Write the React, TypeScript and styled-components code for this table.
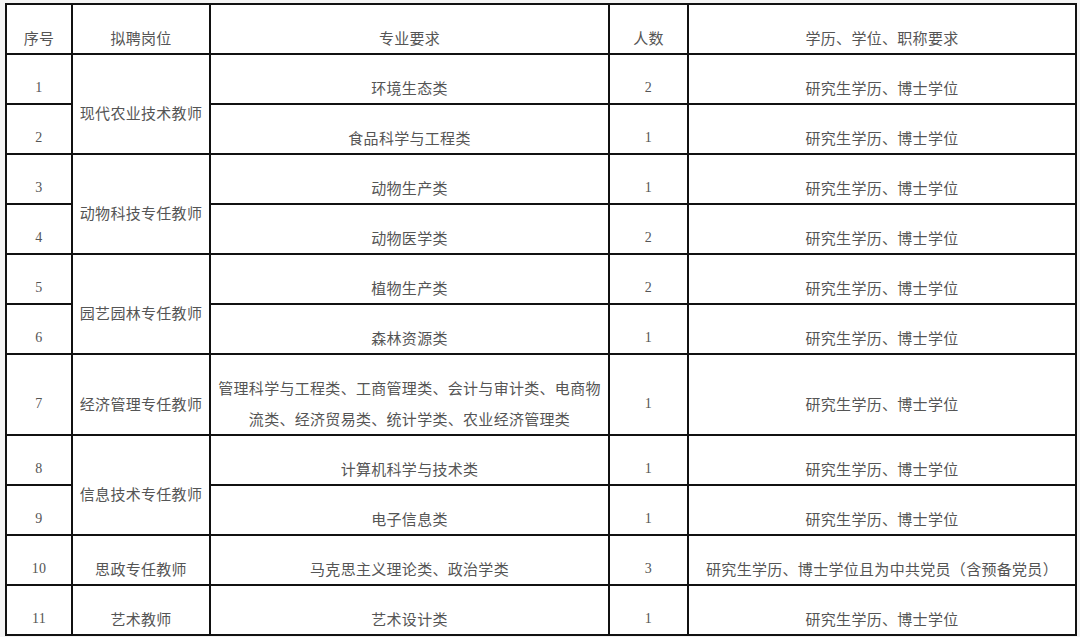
import React from "react";
import styled, { createGlobalStyle } from "styled-components";

const GlobalStyle = createGlobalStyle`
  html, body {
    margin: 0;
    padding: 0;
    background: #f4f4f4;
  }
  body {
    font-family: "Noto Sans CJK SC", "Noto Sans", sans-serif;
  }
`;

const Page = styled.div`
  padding: 3px 5px 0 5px;
`;

const Table = styled.table`
  width: 1070px;
  table-layout: fixed;
  border-collapse: collapse;
  background: #fff;
  border: 2px solid #111;
`;

const Row = styled.tr<{ $h?: number }>`
  height: ${(p) => p.$h ?? 50}px;
`;

const Cell = styled.td`
  border: 2px solid #111;
  padding: 17px 6px 0 6px;
  text-align: center;
  vertical-align: middle;
  font-size: 15px;
  line-height: 31px;
  color: #555;
  letter-spacing: 0.3px;
`;

const Num = styled(Cell)`
  font-family: "Liberation Serif", "Noto Sans CJK SC", serif;
  font-size: 14px;
  color: #555;
`;

type Item = {
  no: string;
  post?: string;
  span?: number;
  major: string;
  count: string;
  req: string;
  h?: number;
};

const BASIC = "研究生学历、博士学位";

const rows: Item[] = [
  { no: "1", post: "现代农业技术教师", span: 2, major: "环境生态类", count: "2", req: BASIC },
  { no: "2", major: "食品科学与工程类", count: "1", req: BASIC },
  { no: "3", post: "动物科技专任教师", span: 2, major: "动物生产类", count: "1", req: BASIC },
  { no: "4", major: "动物医学类", count: "2", req: BASIC },
  { no: "5", post: "园艺园林专任教师", span: 2, major: "植物生产类", count: "2", req: BASIC },
  { no: "6", major: "森林资源类", count: "1", req: BASIC },
  {
    no: "7",
    post: "经济管理专任教师",
    span: 1,
    major: "管理科学与工程类、工商管理类、会计与审计类、电商物流类、经济贸易类、统计学类、农业经济管理类",
    count: "1",
    req: BASIC,
    h: 79,
  },
  { no: "8", post: "信息技术专任教师", span: 2, major: "计算机科学与技术类", count: "1", req: BASIC },
  { no: "9", major: "电子信息类", count: "1", req: BASIC },
  {
    no: "10",
    post: "思政专任教师",
    span: 1,
    major: "马克思主义理论类、政治学类",
    count: "3",
    req: "研究生学历、博士学位且为中共党员（含预备党员）",
  },
  { no: "11", post: "艺术教师", span: 1, major: "艺术设计类", count: "1", req: BASIC },
];

export default function App() {
  return (
    <Page>
      <GlobalStyle />
      <Table>
        <colgroup>
          <col style={{ width: 66 }} />
          <col style={{ width: 138 }} />
          <col style={{ width: 399 }} />
          <col style={{ width: 79 }} />
          <col style={{ width: 388 }} />
        </colgroup>
        <tbody>
          <Row>
            <Cell>序号</Cell>
            <Cell>拟聘岗位</Cell>
            <Cell>专业要求</Cell>
            <Cell>人数</Cell>
            <Cell>学历、学位、职称要求</Cell>
          </Row>
          {rows.map((r) => (
            <Row key={r.no} $h={r.h}>
              <Num>{r.no}</Num>
              {r.post && <Cell rowSpan={r.span}>{r.post}</Cell>}
              <Cell>{r.major}</Cell>
              <Num>{r.count}</Num>
              <Cell>{r.req}</Cell>
            </Row>
          ))}
        </tbody>
      </Table>
    </Page>
  );
}
